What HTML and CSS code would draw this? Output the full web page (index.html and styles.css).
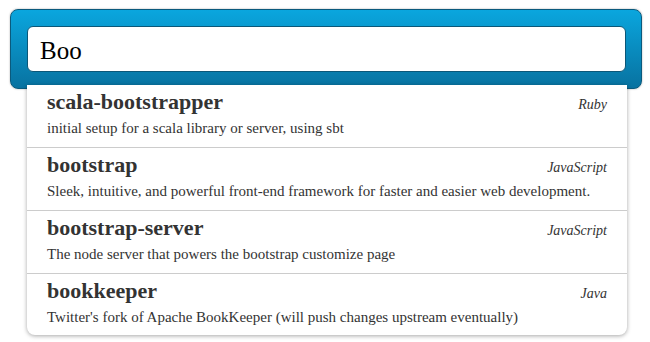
FILE: index.html
```html
<!DOCTYPE html>
<html>
<head>
<meta charset="utf-8">
<link rel="stylesheet" href="styles.css">
</head>
<body>
<div class="page">
  <div class="search-box">
    <input class="search-input" type="text" value="Boo">
  </div>
  <div class="dropdown">
    <div class="item">
      <div class="item-head"><span class="name">scala-bootstrapper</span><span class="lang">Ruby</span></div>
      <div class="desc">initial setup for a scala library or server, using sbt</div>
    </div>
    <div class="item">
      <div class="item-head"><span class="name">bootstrap</span><span class="lang">JavaScript</span></div>
      <div class="desc">Sleek, intuitive, and powerful front-end framework for faster and easier web development.</div>
    </div>
    <div class="item">
      <div class="item-head"><span class="name">bootstrap-server</span><span class="lang">JavaScript</span></div>
      <div class="desc">The node server that powers the bootstrap customize page</div>
    </div>
    <div class="item">
      <div class="item-head"><span class="name">bookkeeper</span><span class="lang">Java</span></div>
      <div class="desc">Twitter's fork of Apache BookKeeper (will push changes upstream eventually)</div>
    </div>
  </div>
</div>
</body>
</html>
```

FILE: styles.css
```css
html, body {
  margin: 0;
  padding: 0;
  background: #fff;
}
body {
  font-family: "Liberation Serif", serif;
  color: #333;
}
.page {
  position: relative;
  width: 650px;
  height: 342px;
}
.search-box {
  position: absolute;
  left: 10px;
  top: 9px;
  width: 598px;
  padding: 16px;
  border: 1px solid #0b5a7d;
  border-radius: 8px;
  background: linear-gradient(#0aa6de, #0872a0);
  box-shadow: 0 0 2px rgba(0, 0, 0, 0.35);
}
.search-input {
  display: block;
  box-sizing: border-box;
  width: 599px;
  height: 46px;
  margin: 0;
  padding: 3px 0 0 12px;
  border: 1px solid #0b5778;
  border-radius: 6px;
  background: #fff;
  font-family: "Liberation Serif", serif;
  font-size: 25px;
  color: #000;
  outline: none;
}
.dropdown {
  position: absolute;
  left: 27px;
  top: 85px;
  width: 600px;
  background: #fff;
  border-radius: 0 0 8px 8px;
  box-shadow: 0 1px 4px rgba(0, 0, 0, 0.35);
}
.item {
  box-sizing: border-box;
  height: 63px;
  padding: 4px 20px 0;
  border-bottom: 1px solid #ccc;
}
.item:last-child {
  border-bottom: none;
  height: 61px;
}
.item-head {
  display: flex;
  justify-content: space-between;
  align-items: baseline;
}
.name {
  font-size: 22px;
  font-weight: bold;
  line-height: 26px;
  color: #333;
}
.lang {
  font-size: 14px;
  font-style: italic;
  color: #333;
}
.desc {
  margin-top: 3px;
  font-size: 15px;
  line-height: 20px;
  color: #333;
}
```
